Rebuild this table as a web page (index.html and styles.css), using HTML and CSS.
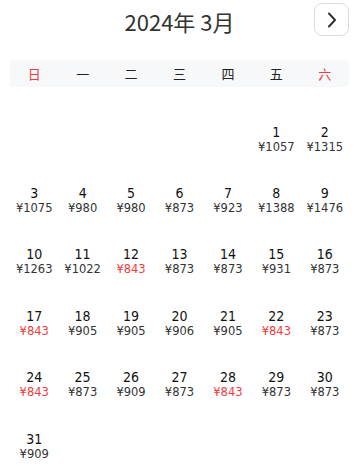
FILE: index.html
```html
<!DOCTYPE html>
<html lang="zh">
<head>
<meta charset="utf-8">
<link rel="stylesheet" href="styles.css">
</head>
<body>
<div class="cal">
  <div class="top">
    <div class="title">2024年 3月</div>
    <button class="next" aria-label="下个月">
      <svg width="10" height="16" viewBox="0 0 10 16"><path d="M2 1.5 L8 8 L2 14.5" fill="none" stroke="#333" stroke-width="2" stroke-linecap="round" stroke-linejoin="round"/></svg>
    </button>
  </div>
  <div class="week">
    <span class="wk red">日</span><span class="wk">一</span><span class="wk">二</span><span class="wk">三</span><span class="wk">四</span><span class="wk">五</span><span class="wk red">六</span>
  </div>
  <div class="grid">
    <div class="cell"></div><div class="cell"></div><div class="cell"></div><div class="cell"></div><div class="cell"></div>
    <div class="cell"><span class="d">1</span><span class="p">¥1057</span></div>
    <div class="cell"><span class="d">2</span><span class="p">¥1315</span></div>
    <div class="cell"><span class="d">3</span><span class="p">¥1075</span></div>
    <div class="cell"><span class="d">4</span><span class="p">¥980</span></div>
    <div class="cell"><span class="d">5</span><span class="p">¥980</span></div>
    <div class="cell"><span class="d">6</span><span class="p">¥873</span></div>
    <div class="cell"><span class="d">7</span><span class="p">¥923</span></div>
    <div class="cell"><span class="d">8</span><span class="p">¥1388</span></div>
    <div class="cell"><span class="d">9</span><span class="p">¥1476</span></div>
    <div class="cell"><span class="d">10</span><span class="p">¥1263</span></div>
    <div class="cell"><span class="d">11</span><span class="p">¥1022</span></div>
    <div class="cell"><span class="d">12</span><span class="p low">¥843</span></div>
    <div class="cell"><span class="d">13</span><span class="p">¥873</span></div>
    <div class="cell"><span class="d">14</span><span class="p">¥873</span></div>
    <div class="cell"><span class="d">15</span><span class="p">¥931</span></div>
    <div class="cell"><span class="d">16</span><span class="p">¥873</span></div>
    <div class="cell"><span class="d">17</span><span class="p low">¥843</span></div>
    <div class="cell"><span class="d">18</span><span class="p">¥905</span></div>
    <div class="cell"><span class="d">19</span><span class="p">¥905</span></div>
    <div class="cell"><span class="d">20</span><span class="p">¥906</span></div>
    <div class="cell"><span class="d">21</span><span class="p">¥905</span></div>
    <div class="cell"><span class="d">22</span><span class="p low">¥843</span></div>
    <div class="cell"><span class="d">23</span><span class="p">¥873</span></div>
    <div class="cell"><span class="d">24</span><span class="p low">¥843</span></div>
    <div class="cell"><span class="d">25</span><span class="p">¥873</span></div>
    <div class="cell"><span class="d">26</span><span class="p">¥909</span></div>
    <div class="cell"><span class="d">27</span><span class="p">¥873</span></div>
    <div class="cell"><span class="d">28</span><span class="p low">¥843</span></div>
    <div class="cell"><span class="d">29</span><span class="p">¥873</span></div>
    <div class="cell"><span class="d">30</span><span class="p">¥873</span></div>
    <div class="cell"><span class="d">31</span><span class="p">¥909</span></div>
  </div>
</div>
</body>
</html>
```
FILE: styles.css
```css
html, body {
  margin: 0;
  padding: 0;
  background: #fff;
}
.cal {
  width: 359px;
  padding: 3px 10px 0;
  box-sizing: border-box;
  font-family: "DejaVu Sans", "Noto Sans CJK SC", sans-serif;
}
.top {
  position: relative;
  height: 33px;
  display: flex;
  justify-content: center;
  align-items: center;
}
.title {
  font-family: "Noto Sans CJK SC", sans-serif;
  font-size: 22px;
  color: #333;
  line-height: 28px;
  margin-top: 3px;
}
.next {
  position: absolute;
  right: 0;
  top: 0;
  width: 35px;
  height: 33px;
  border: 1px solid #dcdcdc;
  border-radius: 8px;
  background: #fff;
  display: flex;
  align-items: center;
  justify-content: center;
  padding: 0;
}
.week {
  margin-top: 24px;
  height: 27px;
  background: #f7f8f9;
  border-radius: 4px;
  display: grid;
  grid-template-columns: repeat(7, 1fr);
  align-items: center;
}
.wk {
  text-align: center;
  font-family: "Noto Sans CJK SC", sans-serif;
  font-size: 13px;
  color: #222;
}
.wk.red {
  color: #ee3d3d;
}
.grid {
  margin-top: 21px;
  display: grid;
  grid-template-columns: repeat(7, 1fr);
  grid-auto-rows: 61.4px;
}
.cell {
  display: flex;
  flex-direction: column;
  align-items: center;
  justify-content: center;
}
.d {
  font-family: "DejaVu Sans Condensed", "DejaVu Sans", sans-serif;
  font-size: 14px;
  line-height: 16px;
  color: #111;
}
.p {
  font-size: 11.5px;
  line-height: 14px;
  color: #333;
}
.p.low {
  color: #ee3d3d;
}
```
